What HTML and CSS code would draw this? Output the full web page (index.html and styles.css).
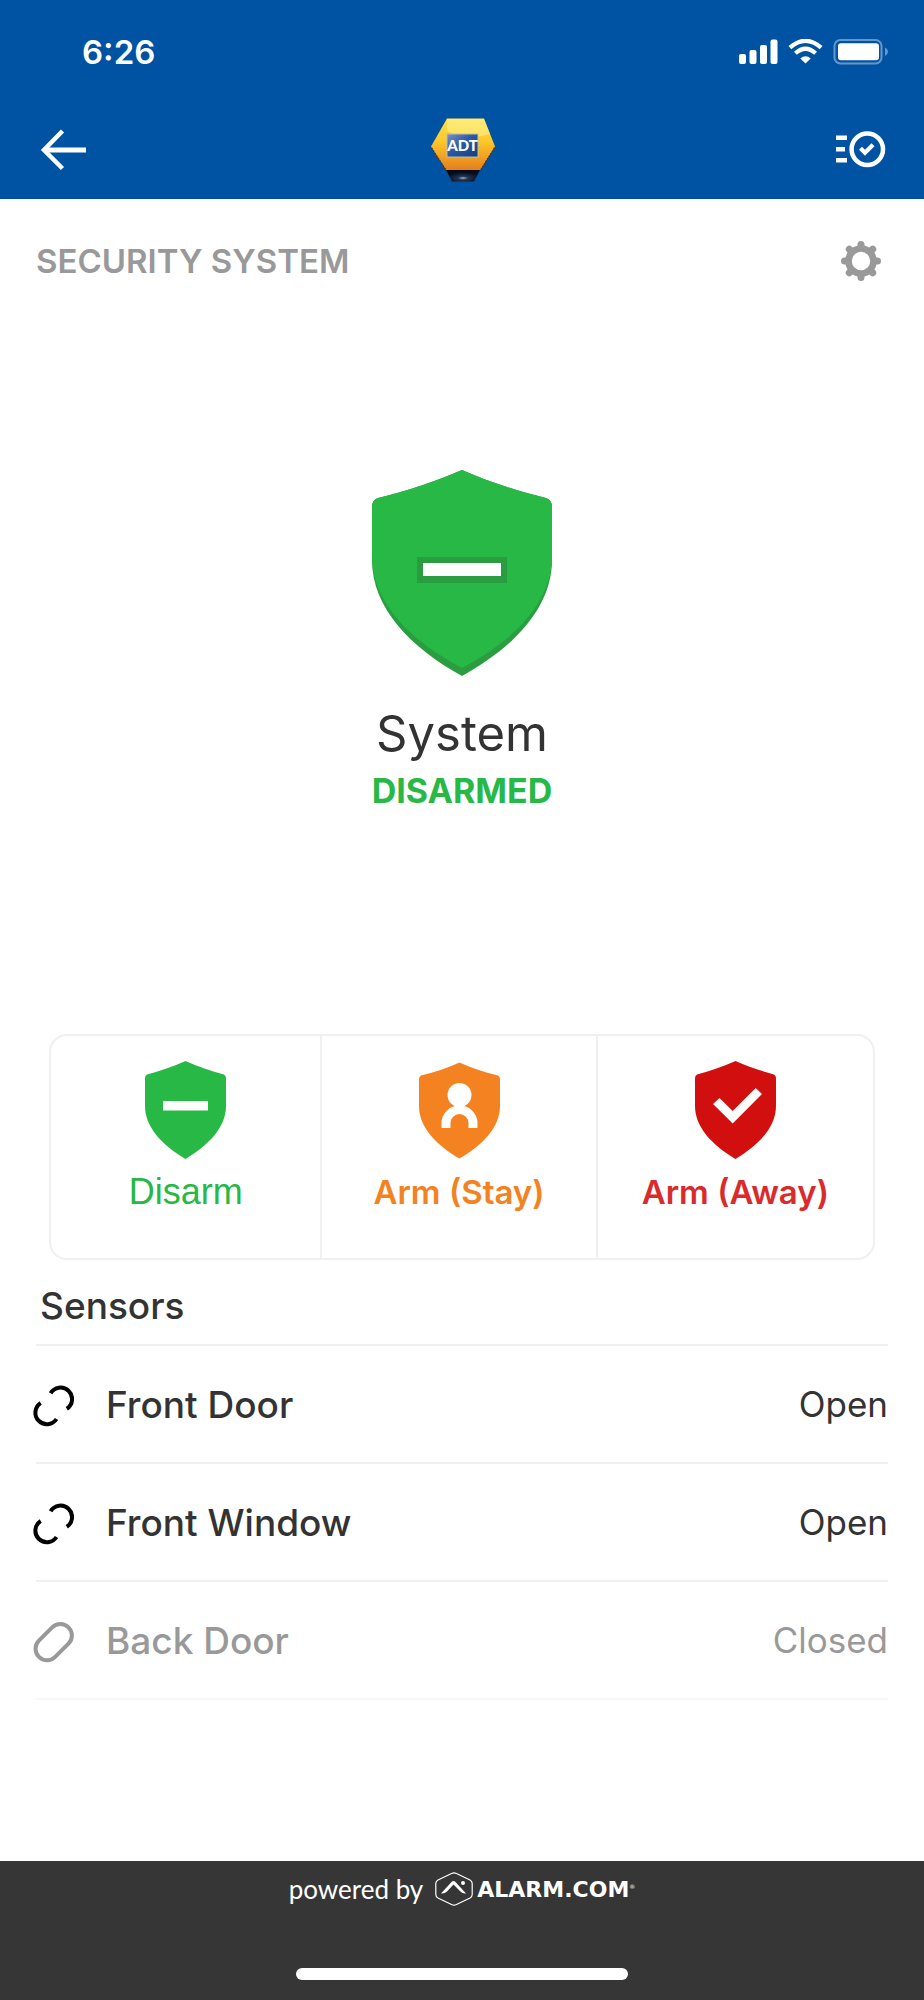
FILE: index.html
```html
<!DOCTYPE html>
<html lang="en">
<head>
<meta charset="utf-8">
<meta name="viewport" content="width=device-width, initial-scale=1">
<title>Security System</title>
<link rel="stylesheet" href="styles.css">
</head>
<body>
<header class="top">
  <div class="status">
    <time class="clock">6:26</time>
    <svg class="status-icons" width="150" height="26" viewBox="0 0 150 26" role="img" aria-label="Signal, Wi-Fi and battery full">
      <g fill="#fff">
        <rect x="0" y="15" width="7" height="10" rx="2"/>
        <rect x="10.500" y="11" width="7" height="14" rx="2"/>
        <rect x="21" y="6" width="7" height="19" rx="2"/>
        <rect x="31.500" y="0.500" width="7" height="24.500" rx="2"/>
        <path d="M66.500 24.500 L61.300 19.500 Q66.500 15 71.700 19.500Z"/>
      </g>
      <g fill="none" stroke="#fff" stroke-width="4.200">
        <path d="M50.900 8.600 Q66.500 -5 82.100 8.600"/>
        <path d="M56.400 14.200 Q66.500 5.200 76.600 14.200"/>
      </g>
      <rect x="95.500" y="1" width="47" height="23.500" rx="6" fill="none" stroke="#6697cb" stroke-width="2"/>
      <rect x="99" y="4.200" width="41" height="17" rx="3" fill="#fff"/>
      <path d="M146 8.500 Q149 10 149 12.800 T146 17Z" fill="#6697cb"/>
    </svg>
  </div>
  <nav class="bar">
    <button class="icon-button" type="button" aria-label="Back">
      <svg width="46" height="42" viewBox="0 0 46 42" fill="none" stroke="#fff" stroke-width="5">
        <path d="M4 21H46"/><path d="M22.500 2 L4 21 L22.500 39.500" stroke-width="4.500"/>
      </svg>
    </button>
    <svg class="brand" width="66" height="66" viewBox="0 0 66 66" role="img" aria-label="ADT">
      <defs>
        <linearGradient id="gold" x1="0" y1="0" x2="0" y2="1">
          <stop offset="0" stop-color="#ffe34a"/><stop offset=".45" stop-color="#fdc629"/><stop offset="1" stop-color="#e47c1c"/>
        </linearGradient>
        <linearGradient id="plate" x1="0" y1="0" x2="1" y2="1">
          <stop offset="0" stop-color="#7d8fca"/><stop offset=".45" stop-color="#2d58a3"/><stop offset="1" stop-color="#113f80"/>
        </linearGradient>
        <radialGradient id="base" cx=".5" cy=".7" r=".5">
          <stop offset="0" stop-color="#9db4d2"/><stop offset=".3" stop-color="#24344f"/><stop offset="1" stop-color="#060b1c"/>
        </radialGradient>
      </defs>
      <path d="M17 1.500H54L65 29.500L49.500 54H17L1 29.500Z" fill="url(#gold)"/>
      <path d="M17 2H54L60 17Q38 24 17 14Z" fill="#fff4a0" opacity=".5"/>
      <path d="M1.500 31L17 55M64.500 31L49.500 55" stroke="#5c3218" stroke-width="1.500" stroke-dasharray="1.500 1.500"/>
      <path d="M16 53H50L44 64.500H22Z" fill="url(#base)"/>
      <rect x="17" y="17" width="31" height="23" fill="url(#plate)" stroke="#b9bfae" stroke-width="1"/>
      <text class="brand-text" x="32.500" y="34" text-anchor="middle">ADT</text>
    </svg>
    <button class="icon-button icon-button-end" type="button" aria-label="Activity">
      <svg width="50" height="37" viewBox="0 0 50 37">
        <path d="M0 4.500H11V9H0ZM0 16H9V20.500H0ZM0 27H11V31.500H0Z" fill="#fff"/>
        <circle cx="31.300" cy="18.200" r="15.700" fill="none" stroke="#fff" stroke-width="4.500"/>
        <path d="M24.500 17.300L29 21.800L37 13.800" fill="none" stroke="#fff" stroke-width="4.200"/>
      </svg>
    </button>
  </nav>
</header>

<main class="content">
  <div class="title-row">
    <h1 class="title">SECURITY SYSTEM</h1>
    <button class="icon-button icon-button-end" type="button" aria-label="Settings">
      <svg width="42" height="42" viewBox="-21 -21 42 42">
        <g stroke="#999" stroke-width="7" stroke-linecap="round">
          <path d="M0 -16.500V16.500M-16.500 0H16.500M-11.700 -11.700L11.700 11.700M11.700 -11.700L-11.700 11.700"/>
        </g>
        <circle r="15.800" fill="#999"/>
        <circle r="9.200" fill="#fff"/>
      </svg>
    </button>
  </div>

  <section class="hero">
    <svg width="180" height="206" viewBox="0 0 180 206" aria-hidden="true">
      <path d="M90 0C115 11 145 21 174 28Q180 30 180 37V90C180 138 141 178 90 206C39 178 0 138 0 90V37Q0 30 6 28C35 21 65 11 90 0Z" fill="#2b9d41"/>
      <path d="M90 0C115 11 145 21 174 28Q180 30 180 37V86C180 133 141 171 90 198C39 171 0 133 0 86V37Q0 30 6 28C35 21 65 11 90 0Z" fill="#27b845"/>
      <path d="M45 87H135V113H45Z" fill="#2b9d41"/>
      <path d="M51 93H129V106H51Z" fill="#fff"/>
    </svg>
    <h2 class="hero-name">System</h2>
    <p class="hero-state">DISARMED</p>
  </section>

  <div class="modes">
    <button class="mode mode-disarm" type="button">
      <svg width="81" height="98" viewBox="0 0 81 98" aria-hidden="true">
        <path d="M40.500 0C53 5.500 66 10 79 13.500Q81 14.500 81 17V45C81 66 64 84 40.500 98C17 84 0 66 0 45V17Q0 14.500 2 13.500C15 10 28 5.500 40.500 0Z" fill="#27b845"/>
        <path d="M18 40H63V49.500H18Z" fill="#fff"/>
      </svg>
      <span>Disarm</span>
    </button>
    <button class="mode mode-stay" type="button">
      <svg width="81" height="98" viewBox="0 0 81 98" aria-hidden="true">
        <path d="M40.500 1.500C53 7 66 11.500 79 14.500Q81 15.500 81 18V45C81 66 64 84 40.500 97.500C17 84 0 66 0 45V18Q0 15.500 2 14.500C15 11.500 28 7 40.500 1.500Z" fill="#f58220"/>
        <circle cx="40.500" cy="34" r="12" fill="#fff"/>
        <path d="M22.500 67V62A18 17.500 0 0 1 58.500 62V67H49.500V62A9 9 0 0 0 31.500 62V67Z" fill="#fff"/>
      </svg>
      <span>Arm (Stay)</span>
    </button>
    <button class="mode mode-away" type="button">
      <svg width="81" height="98" viewBox="0 0 81 98" aria-hidden="true">
        <path d="M40.500 0C53 5.500 66 10 79 13.500Q81 14.500 81 17V45C81 66 64 84 40.500 98C17 84 0 66 0 45V17Q0 14.500 2 13.500C15 10 28 5.500 40.500 0Z" fill="#d20f0f"/>
        <path d="M18 43L24.500 37L37.700 50L60.700 27L67 33L37.700 62.500Z" fill="#fff"/>
      </svg>
      <span>Arm (Away)</span>
    </button>
  </div>

  <section class="sensors">
    <h2 class="sensors-title">Sensors</h2>
    <ul class="sensor-list">
      <li class="sensor">
        <svg class="sensor-icon" width="42" height="42" viewBox="0 0 42 42" fill="none" stroke="#000" stroke-width="4" aria-hidden="true">
          <path d="M18.600 8.300A11.500 11.500 0 1 1 34.800 23.700"/><path d="M8.700 18A11.500 11.500 0 1 0 24.500 34"/>
        </svg>
        <span class="sensor-name">Front Door</span>
        <span class="sensor-state">Open</span>
      </li>
      <li class="sensor">
        <svg class="sensor-icon" width="42" height="42" viewBox="0 0 42 42" fill="none" stroke="#000" stroke-width="4" aria-hidden="true">
          <path d="M18.600 8.300A11.500 11.500 0 1 1 34.800 23.700"/><path d="M8.700 18A11.500 11.500 0 1 0 24.500 34"/>
        </svg>
        <span class="sensor-name">Front Window</span>
        <span class="sensor-state">Open</span>
      </li>
      <li class="sensor sensor-closed">
        <svg class="sensor-icon" width="42" height="42" viewBox="0 0 42 42" fill="none" stroke="#999" stroke-width="4" aria-hidden="true">
          <path d="M20.200 6.400A11.500 11.500 0 0 1 36.500 22.700L23.200 35.900A11.500 11.500 0 0 1 6.900 19.600Z"/>
        </svg>
        <span class="sensor-name">Back Door</span>
        <span class="sensor-state">Closed</span>
      </li>
    </ul>
  </section>
</main>

<footer class="foot">
  <div class="powered">
    <span class="powered-by">powered by</span>
    <svg width="38" height="34" viewBox="0 0 38 34" aria-hidden="true">
      <path d="M16.500 1.500Q19 0.200 21.500 1.500L35 8Q37.200 9.200 37.200 11.500V22.500Q37.200 24.800 35 26L21.500 32.500Q19 33.800 16.500 32.500L3 26Q0.800 24.800 0.800 22.500V11.500Q0.800 9.200 3 8Z" fill="none" stroke="#fff" stroke-width="1.200"/>
      <path d="M6 21.500L16.500 10Q18.500 8 20.500 10L31 21.500Q27.500 22 25.500 19.500L18.500 12.500L12 19.500Q9.500 22 6 21.500Z" fill="#fff"/>
      <circle cx="28" cy="11" r="2" fill="#fff"/>
    </svg>
    <span class="alarm">ALARM.COM<sup class="reg">®</sup></span>
  </div>
  <div class="home"></div>
</footer>
</body>
</html>
```

FILE: styles.css
```css
* {
  box-sizing: border-box;
}

body {
  margin: 0;
  min-height: 100vh;
  display: flex;
  flex-direction: column;
  background: #fff;
  color: #333;
  font-family: Inter, "Liberation Sans", sans-serif;
}

h1,
h2,
p,
ul {
  margin: 0;
  padding: 0;
}

svg {
  display: block;
  flex: none;
}

button {
  border: 0;
  padding: 0;
  background: none;
  font: inherit;
  cursor: pointer;
}

.top {
  background: #0052a3;
  color: #fff;
  padding-bottom: 4px;
}

.status {
  height: 104px;
  padding: 0 35px 0 82px;
  display: flex;
  align-items: center;
  justify-content: space-between;
}

.clock {
  font-size: 33px;
  font-weight: 600;
}

.bar {
  height: 91px;
  padding: 0 38px 0 40px;
  display: grid;
  grid-template-columns: 1fr auto 1fr;
  align-items: center;
}

.icon-button {
  justify-self: start;
}

.icon-button-end {
  justify-self: end;
}

.brand-text {
  font: 900 15px Lato, sans-serif;
  fill: #fff;
}

.content {
  flex: 1;
}

.title-row {
  height: 124px;
  padding: 0 42px 0 36px;
  display: flex;
  align-items: center;
  justify-content: space-between;
}

.title {
  font-size: 33px;
  font-weight: 600;
  color: #999;
}

.hero {
  padding: 147px 0 221px;
  display: flex;
  flex-direction: column;
  align-items: center;
}

.hero-name {
  margin-top: 29px;
  font-size: 49px;
  line-height: 58px;
  font-weight: 400;
}

.hero-state {
  margin-top: 6px;
  font-size: 34px;
  line-height: 44px;
  font-weight: 700;
  color: #27b845;
}

.modes {
  margin: 0 49px;
  height: 226px;
  display: grid;
  grid-template-columns: 270fr 276fr 278fr;
  border: 2px solid #f0f0f0;
  border-radius: 18px;
}

.mode {
  padding-top: 25px;
  display: flex;
  flex-direction: column;
  align-items: center;
  gap: 13px;
  font-size: 33px;
  line-height: 40px;
  font-weight: 600;
}

.mode + .mode {
  border-left: 2px solid #f0f0f0;
}

.mode-disarm {
  color: #27b845;
  font-family: "Liberation Sans", sans-serif;
  font-size: 36px;
  font-weight: 400;
}

.mode-stay {
  color: #f58220;
}

.mode-away {
  color: #d92b2b;
}

.sensors {
  padding: 0 36px;
}

.sensors-title {
  padding: 24px 4px 16px;
  font-size: 37px;
  line-height: 44px;
  font-weight: 500;
  border-bottom: 2px solid #f0f0f0;
}

.sensor-list {
  list-style: none;
}

.sensor {
  height: 118px;
  display: flex;
  align-items: center;
  border-bottom: 2px solid #f0f0f0;
}

.sensor-icon {
  margin: 4px 32px 0 -4px;
}

.sensor-name {
  flex: 1;
  font-size: 37px;
  font-weight: 500;
}

.sensor-state {
  font-size: 35px;
}

.sensor-closed {
  color: #999;
  border-bottom-color: #f8f8f8;
}

.foot {
  height: 139px;
  padding: 8px 0 20px;
  display: flex;
  flex-direction: column;
  align-items: center;
  justify-content: space-between;
  background: #363636;
  color: #fff;
}

.powered {
  height: 40px;
  display: flex;
  align-items: center;
}

.powered-by {
  margin-right: 12px;
  font-family: Lato, sans-serif;
  font-size: 26px;
}

.alarm {
  margin-left: 4px;
  font: 700 22px "DejaVu Sans", sans-serif;
}

.reg {
  font-size: 6px;
  font-weight: 400;
  vertical-align: 8px;
  line-height: 0;
}

.home {
  width: 36%;
  height: 12px;
  border-radius: 6px;
  background: #fff;
}
```
